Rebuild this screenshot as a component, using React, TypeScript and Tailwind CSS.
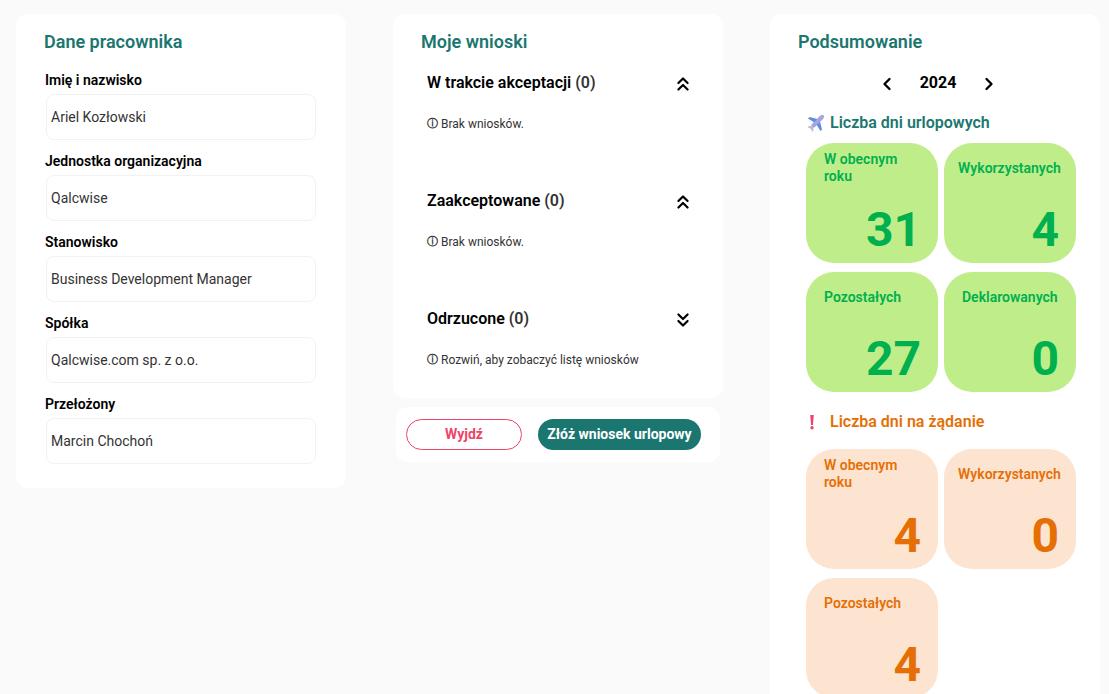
import React from "react";
import { ChevronLeft, ChevronRight, ChevronsDown, ChevronsUp } from "lucide-react";

const fields = [
  { label: "Imię i nazwisko", value: "Ariel Kozłowski" },
  { label: "Jednostka organizacyjna", value: "Qalcwise" },
  { label: "Stanowisko", value: "Business Development Manager" },
  { label: "Spółka", value: "Qalcwise.com sp. z o.o." },
  { label: "Przełożony", value: "Marcin Chochoń" },
];

const requests = [
  { title: "W trakcie akceptacji", open: true, note: "Brak wniosków." },
  { title: "Zaakceptowane", open: true, note: "Brak wniosków." },
  { title: "Odrzucone", open: false, note: "Rozwiń, aby zobaczyć listę wniosków" },
];

function PlaneIcon() {
  return (
    <svg width="17" height="17" viewBox="0 0 17 17" className="shrink-0">
      <path
        d="M16.4.6c-1-.7-2.6-.2-3.5.7L10.2 4 2.6 2 1 3.6l6 3.6-2.6 2.8 2.6 2.600 2.800-2.600 3.600 6 1.600-1.600-2-7.600L15.700 4.100c.9-.9 1.400-2.500.7-3.500z"
        fill="#5b8de0"
      />
      <path d="M12.900 1.300c.9-.9 2.500-1.400 3.500-.7.700 1 .2 2.600-.7 3.500L9.800 10l-2.800 2.600-2.600-2.600z" fill="#a9a3e0" />
      <path d="M4.400 10l2.600 2.600-.8.8.3 2.200-1.200 1.200-1.500-3.100L.7 12.200l1.200-1.200 1.900.3z" fill="#c3b4de" />
    </svg>
  );
}

function ExclamationIcon() {
  return (
    <svg width="6" height="16" viewBox="0 0 6 16" className="shrink-0">
      <path d="M1.200 1h3.600L3.900 11H2.100z" fill="#f0436a" />
      <circle cx="3" cy="13.800" r="1.700" fill="#f0436a" />
    </svg>
  );
}

function StatCard({
  label,
  value,
  tone,
  wide,
}: {
  label: string;
  value: number;
  tone: "green" | "orange";
  wide?: boolean;
}) {
  const colors =
    tone === "green" ? "bg-[#bfed8a] text-[#00b04f]" : "bg-[#fce4d1] text-[#e66f05]";
  return (
    <div className={`flex h-[120px] w-[132px] flex-col rounded-[28px] px-[18px] ${colors}`}>
      <div
        className={`flex h-[50px] items-center text-[14px] leading-[17px] font-semibold ${
          wide ? "-mx-1 whitespace-nowrap" : ""
        }`}
      >
        {label}
      </div>
      <div className="-mr-px mt-[15px] text-right text-[48px] leading-[44px] font-bold">{value}</div>
    </div>
  );
}

export default function App() {
  return (
    <div className="h-[694px] overflow-hidden bg-[#fafafa] font-['Roboto',sans-serif]">
      <div className="flex items-start gap-[47px] pl-4 pt-[14px]">
        {/* Dane pracownika */}
        <section className="h-[474px] w-[330px] rounded-xl bg-white pl-7 pt-[17px]">
          <h2 className="text-[18px] leading-[21px] font-semibold text-[#1c7670]">Dane pracownika</h2>
          <div className="mt-[15px] flex flex-col">
            {fields.map((f) => (
              <div key={f.label} className="h-[81px] pl-px pt-[3px]">
                <div className="text-[14px] leading-[20px] font-semibold text-black">{f.label}</div>
                <div className="mt-[4px] ml-px flex h-[46px] w-[270px] items-center rounded-lg border border-[#f2f2f2] pl-[4px] text-[14px] text-[#333]">
                  {f.value}
                </div>
              </div>
            ))}
          </div>
        </section>

        {/* Moje wnioski */}
        <div className="flex w-[330px] flex-col">
          <section className="h-[384px] rounded-xl bg-white pl-7 pt-[17px]">
            <h2 className="text-[18px] leading-[21px] font-semibold text-[#1c7670]">Moje wnioski</h2>
            <div className="mt-[21px] flex flex-col">
              {requests.map((r) => (
                <div key={r.title} className="h-[118px] pl-[6px] pr-[29px]">
                  <div className="flex h-5 items-center justify-between">
                    <div className="text-[16px] leading-5 font-semibold text-black">
                      {r.title} <span className="text-[#333]">(0)</span>
                    </div>
                    {r.open ? (
                      <ChevronsUp size={22} strokeWidth={2.4} className="mt-[2px] text-black" />
                    ) : (
                      <ChevronsDown size={22} strokeWidth={2.4} className="mt-[2px] text-black" />
                    )}
                  </div>
                  <div className="mt-[23px] flex items-center gap-[3px] text-[12px] leading-[16px] text-[#333]">
                    <span className="font-['DejaVu_Sans',sans-serif] text-[11px] font-bold">ⓘ</span>
                    <span>{r.note}</span>
                  </div>
                </div>
              ))}
            </div>
          </section>
          <div className="mx-[3px] mt-[9px] flex h-[55px] w-[324px] items-center gap-4 rounded-xl bg-white pl-[10px]">
            <button
              type="button"
              className="h-[31px] w-[116px] rounded-full border border-[#f0436a] text-[14px] font-bold text-[#f0436a]"
            >
              Wyjdź
            </button>
            <button
              type="button"
              className="h-[31px] w-[163px] rounded-full bg-[#1c7670] text-[14px] font-bold text-white"
            >
              Złóż wniosek urlopowy
            </button>
          </div>
        </div>

        {/* Podsumowanie */}
        <section className="h-[720px] w-[330px] rounded-xl bg-white pl-9 pt-[17px]">
          <h2 className="-ml-2 text-[18px] leading-[21px] font-semibold text-[#1c7670]">Podsumowanie</h2>
          <div className="mt-[20px] flex w-[264px] items-center justify-center gap-[18px]">
            <ChevronLeft size={20} strokeWidth={2.8} className="mt-[2px] text-black" />
            <span className="w-[46px] text-center text-[16px] leading-5 font-bold text-black">2024</span>
            <ChevronRight size={20} strokeWidth={2.8} className="mt-[2px] text-black" />
          </div>
          <div className="mt-[19px] flex h-5 items-center gap-[6px] pl-px text-[16px] font-semibold text-[#1c7670]">
            <PlaneIcon />
            Liczba dni urlopowych
          </div>
          <div className="mt-[10px] grid w-[270px] grid-cols-[132px_132px] gap-x-[6px] gap-y-[9px]">
            <StatCard tone="green" label="W obecnym roku" value={31} />
            <StatCard tone="green" label="Wykorzystanych" value={4} wide />
            <StatCard tone="green" label="Pozostałych" value={27} />
            <StatCard tone="green" label="Deklarowanych" value={0} />
          </div>
          <div className="mt-[20px] flex h-5 items-center gap-[15px] pl-[3px] text-[16px] font-semibold text-[#e66f05]">
            <ExclamationIcon />
            Liczba dni na żądanie
          </div>
          <div className="mt-[17px] grid w-[270px] grid-cols-[132px_132px] gap-x-[6px] gap-y-[9px]">
            <StatCard tone="orange" label="W obecnym roku" value={4} />
            <StatCard tone="orange" label="Wykorzystanych" value={0} wide />
            <StatCard tone="orange" label="Pozostałych" value={4} />
          </div>
        </section>
      </div>
    </div>
  );
}
